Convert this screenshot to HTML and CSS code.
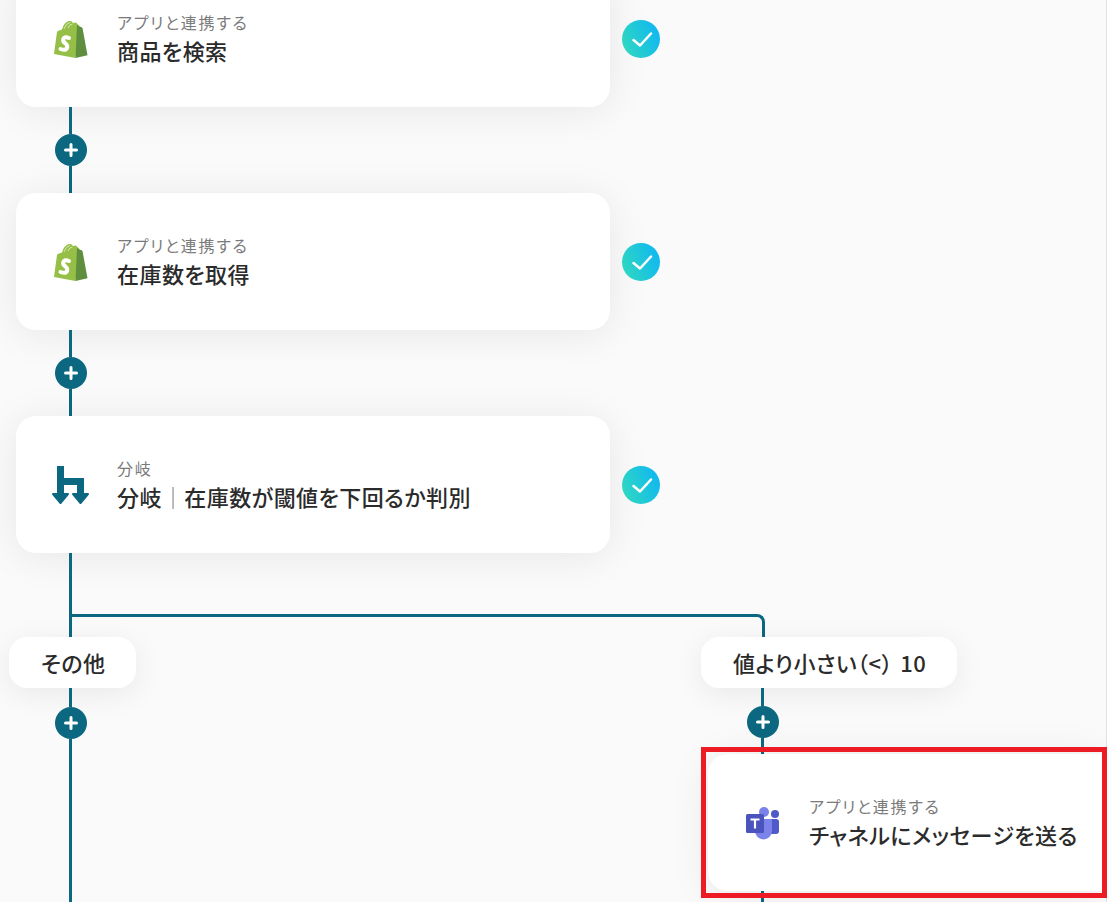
FILE: index.html
```html
<!DOCTYPE html>
<html lang="ja">
  <head>
    <title>フローボット</title>
    <link rel="stylesheet" href="styles.css">
  </head>
  <body>
    <div class="flow">
      <div class="step">
        <div class="card">
          <svg class="icon" viewBox="0 0 40 40">
            <path fill="#95bf47" d="M3 35 6 13 Q6 12 8 11.500 L11 10.500 Q13 3 18 2 Q21 1.500 22 4 L25 3.500 28.500 7 24.500 39 Z"/>
            <path fill="#5e8e3e" d="M24.500 39 36.500 36.200 31.500 9 Q31.300 8 28.500 7.500 L26 6 Z"/>
            <path fill="none" stroke="#d8e8b0" stroke-width="1" d="M13 10 Q15 4 19 3.500 M17 9 Q18.500 5 21.500 5"/>
            <path fill="none" stroke="#fff" stroke-width="4" stroke-linecap="round" d="M18 19 Q13.500 17 12.300 20 Q11.500 22.500 14.500 24.500 Q17 26.500 16 29 Q14.500 32 9.500 30"/>
          </svg>
          <div class="card-text">
            <div class="card-label">アプリと連携する</div>
            <div class="card-title">商品を検索</div>
          </div>
        </div>
        <svg class="check" viewBox="0 0 38 38">
          <defs>
            <linearGradient id="checkGrad" x1="0" y1="0.7" x2="1" y2="0.3">
              <stop offset="0" stop-color="#2fd8c0"/>
              <stop offset="1" stop-color="#10b7f2"/>
            </linearGradient>
          </defs>
          <circle cx="19" cy="19" r="19" fill="url(#checkGrad)"/>
          <path fill="none" stroke="#fff" stroke-width="2.500" stroke-linecap="round" stroke-linejoin="round" d="M11.500 20 18 25.500 29 13.500"/>
        </svg>
      </div>

      <div class="connector">
        <div class="line"></div>
        <svg class="plus" viewBox="0 0 32 32"><circle cx="16" cy="16" r="16"/><path d="M10.500 16h11M16 10.500v11"/></svg>
        <div class="line"></div>
      </div>

      <div class="step">
        <div class="card">
          <svg class="icon" viewBox="0 0 40 40">
            <path fill="#95bf47" d="M3 35 6 13 Q6 12 8 11.500 L11 10.500 Q13 3 18 2 Q21 1.500 22 4 L25 3.500 28.500 7 24.500 39 Z"/>
            <path fill="#5e8e3e" d="M24.500 39 36.500 36.200 31.500 9 Q31.300 8 28.500 7.500 L26 6 Z"/>
            <path fill="none" stroke="#d8e8b0" stroke-width="1" d="M13 10 Q15 4 19 3.500 M17 9 Q18.500 5 21.500 5"/>
            <path fill="none" stroke="#fff" stroke-width="4" stroke-linecap="round" d="M18 19 Q13.500 17 12.300 20 Q11.500 22.500 14.500 24.500 Q17 26.500 16 29 Q14.500 32 9.500 30"/>
          </svg>
          <div class="card-text">
            <div class="card-label">アプリと連携する</div>
            <div class="card-title">在庫数を取得</div>
          </div>
        </div>
        <svg class="check" viewBox="0 0 38 38">
          <circle cx="19" cy="19" r="19" fill="url(#checkGrad)"/>
          <path fill="none" stroke="#fff" stroke-width="2.500" stroke-linecap="round" stroke-linejoin="round" d="M11.500 20 18 25.500 29 13.500"/>
        </svg>
      </div>

      <div class="connector">
        <div class="line"></div>
        <svg class="plus" viewBox="0 0 32 32"><circle cx="16" cy="16" r="16"/><path d="M10.500 16h11M16 10.500v11"/></svg>
        <div class="line"></div>
      </div>

      <div class="step">
        <div class="card">
          <svg class="icon" viewBox="0 0 40 40">
            <path fill="none" stroke="#0b6880" stroke-width="7" d="M9.500 1V29M9.500 16.500H29.500V29"/>
            <path fill="#0b6880" stroke="#0b6880" stroke-width="2" stroke-linejoin="round" d="M2 29H17L9.500 38ZM22 29H37L29.500 38Z"/>
          </svg>
          <div class="card-text">
            <div class="card-label">分岐</div>
            <div class="card-title">分岐<span class="sep">｜</span>在庫数が閾値を下回るか判別</div>
          </div>
        </div>
        <svg class="check" viewBox="0 0 38 38">
          <circle cx="19" cy="19" r="19" fill="url(#checkGrad)"/>
          <path fill="none" stroke="#fff" stroke-width="2.500" stroke-linecap="round" stroke-linejoin="round" d="M11.500 20 18 25.500 29 13.500"/>
        </svg>
      </div>

      <div class="branch-stem">
        <div class="branch-rail"></div>
      </div>

      <div class="lanes">
        <div class="lane lane-left">
          <div class="pill">その他</div>
          <div class="connector connector-fill">
            <div class="line line-short"></div>
            <svg class="plus" viewBox="0 0 32 32"><circle cx="16" cy="16" r="16"/><path d="M10.500 16h11M16 10.500v11"/></svg>
            <div class="line"></div>
          </div>
        </div>

        <div class="lane lane-right">
          <div class="pill">値より小さい（&lt;） 10</div>
          <div class="connector connector-right">
            <div class="line line-short"></div>
            <svg class="plus" viewBox="0 0 32 32"><circle cx="16" cy="16" r="16"/><path d="M10.500 16h11M16 10.500v11"/></svg>
            <div class="line"></div>
          </div>
          <div class="picked">
            <div class="card card-cut">
              <svg class="icon" viewBox="0 0 40 40">
                <circle cx="32" cy="11" r="4" fill="#5059c9"/>
                <rect x="26" y="16" width="10" height="15" rx="3" fill="#5059c9"/>
                <circle cx="21" cy="9" r="5" fill="#7b83eb"/>
                <path fill="#7b83eb" d="M12 16H29V28A8.500 8.500 0 0 1 12 28Z"/>
                <rect x="3" y="11" width="18" height="19" rx="1.500" fill="#4b53bc"/>
                <path fill="none" stroke="#fff" stroke-width="2.200" d="M7.500 16.500H16.500M12 16.500V25.500"/>
              </svg>
              <div class="card-text">
                <div class="card-label">アプリと連携する</div>
                <div class="card-title">チャネルにメッセージを送る</div>
              </div>
            </div>
            <div class="highlight"></div>
          </div>
          <div class="line line-tail"></div>
        </div>
      </div>
    </div>
  </body>
</html>
```

FILE: styles.css
```css
* {
  box-sizing: border-box;
}
html, body {
  margin: 0;
  height: 902px;
  overflow: hidden;
  background: #fafafa;
}
body {
  font-family: "Noto Sans CJK JP", "Noto Sans", sans-serif;
  font-feature-settings: "palt";
  color: #2b2b2b;
}
.flow {
  display: flex;
  flex-direction: column;
  margin-top: -30px;
  height: 932px;
  border-right: 1px solid #e2e2e2;
}
.step {
  display: flex;
  align-items: center;
  gap: 12px;
  margin-left: 16px;
}
.card {
  display: flex;
  flex: none;
  align-items: center;
  gap: 26px;
  width: 594px;
  height: 137px;
  padding-left: 35px;
  background: #fff;
  border-radius: 20px;
  box-shadow: 0 4px 40px rgba(0, 0, 0, 0.08);
}
.card-cut {
  width: 398px;
  border-radius: 20px 0 0 20px;
}
.icon {
  flex: none;
  width: 40px;
  height: 40px;
}
.card-label {
  font-size: 16px;
  line-height: 22px;
  letter-spacing: 0.11em;
  color: #7a7a7a;
}
.card-title {
  margin-top: 1px;
  font-size: 22px;
  line-height: 32px;
  font-weight: 500;
  letter-spacing: 0.02em;
  white-space: nowrap;
}
.sep {
  display: inline-block;
  font-weight: 400;
  color: #777;
}
.check {
  flex: none;
  width: 38px;
  height: 38px;
}
.connector {
  display: flex;
  flex-direction: column;
  width: 32px;
  height: 86px;
  margin-left: 55px;
}
.line {
  flex: 1;
  width: 3px;
  margin-left: 14px;
  background: #0b6880;
}
.plus {
  flex: none;
  width: 32px;
  height: 32px;
  fill: #0b6880;
}
.plus path {
  fill: none;
  stroke: #fff;
  stroke-width: 3;
  stroke-linecap: round;
}
.branch-stem {
  width: 696px;
  height: 84px;
  margin-left: 69px;
  border-left: 3px solid #0b6880;
}
.branch-rail {
  height: 23px;
  margin-top: 61px;
  border-top: 3px solid #0b6880;
  border-right: 3px solid #0b6880;
  border-top-right-radius: 8px;
}
.lanes {
  display: flex;
  flex: 1;
}
.lane {
  display: flex;
  flex-direction: column;
}
.lane-left {
  flex: none;
  width: 701px;
  padding-left: 9px;
}
.lane-right {
  flex: 1;
}
.pill {
  align-self: flex-start;
  height: 51px;
  padding: 0 31px 0 32px;
  background: #fff;
  border-radius: 18px;
  box-shadow: 0 6px 30px rgba(0, 0, 0, 0.07);
  font-size: 22px;
  line-height: 51px;
  font-weight: 500;
  letter-spacing: 0.02em;
  word-spacing: 2px;
  white-space: nowrap;
}
.line-short {
  flex: none;
  height: 19px;
}
.connector-fill {
  flex: 1;
  margin-left: 46px;
}
.connector-right {
  height: 66px;
  margin-left: 46px;
}
.connector-right .line-short {
  height: 18px;
}
.picked {
  position: relative;
  margin-left: 7px;
}
.highlight {
  position: absolute;
  top: -7px;
  bottom: -7px;
  left: -7px;
  width: 406px;
  border: 5px solid #ed1c24;
}
.line-tail {
  flex: 1;
  margin-left: 60px;
}
```
